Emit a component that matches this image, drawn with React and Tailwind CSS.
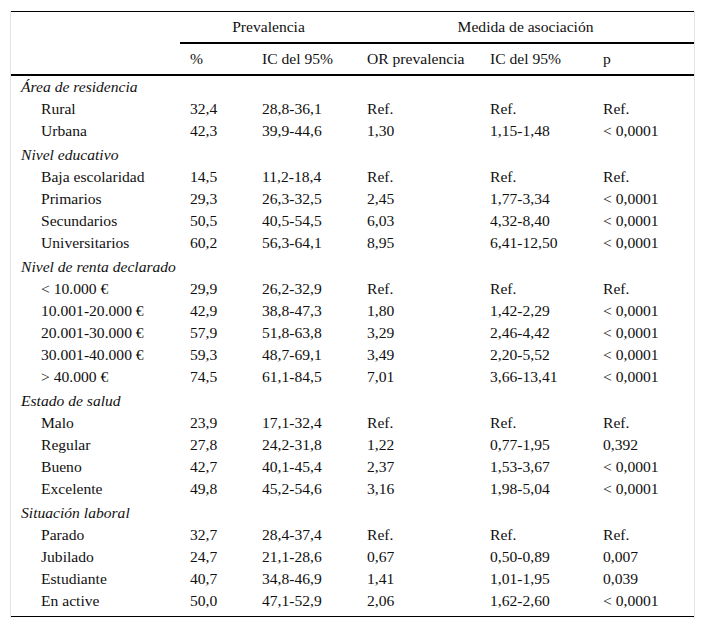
import React from "react";

const groups = [
  {
    title: "Área de residencia",
    rows: [
      ["Rural", "32,4", "28,8-36,1", "Ref.", "Ref.", "Ref."],
      ["Urbana", "42,3", "39,9-44,6", "1,30", "1,15-1,48", "< 0,0001"],
    ],
  },
  {
    title: "Nivel educativo",
    rows: [
      ["Baja escolaridad", "14,5", "11,2-18,4", "Ref.", "Ref.", "Ref."],
      ["Primarios", "29,3", "26,3-32,5", "2,45", "1,77-3,34", "< 0,0001"],
      ["Secundarios", "50,5", "40,5-54,5", "6,03", "4,32-8,40", "< 0,0001"],
      ["Universitarios", "60,2", "56,3-64,1", "8,95", "6,41-12,50", "< 0,0001"],
    ],
  },
  {
    title: "Nivel de renta declarado",
    rows: [
      ["< 10.000 €", "29,9", "26,2-32,9", "Ref.", "Ref.", "Ref."],
      ["10.001-20.000 €", "42,9", "38,8-47,3", "1,80", "1,42-2,29", "< 0,0001"],
      ["20.001-30.000 €", "57,9", "51,8-63,8", "3,29", "2,46-4,42", "< 0,0001"],
      ["30.001-40.000 €", "59,3", "48,7-69,1", "3,49", "2,20-5,52", "< 0,0001"],
      ["> 40.000 €", "74,5", "61,1-84,5", "7,01", "3,66-13,41", "< 0,0001"],
    ],
  },
  {
    title: "Estado de salud",
    rows: [
      ["Malo", "23,9", "17,1-32,4", "Ref.", "Ref.", "Ref."],
      ["Regular", "27,8", "24,2-31,8", "1,22", "0,77-1,95", "0,392"],
      ["Bueno", "42,7", "40,1-45,4", "2,37", "1,53-3,67", "< 0,0001"],
      ["Excelente", "49,8", "45,2-54,6", "3,16", "1,98-5,04", "< 0,0001"],
    ],
  },
  {
    title: "Situación laboral",
    rows: [
      ["Parado", "32,7", "28,4-37,4", "Ref.", "Ref.", "Ref."],
      ["Jubilado", "24,7", "21,1-28,6", "0,67", "0,50-0,89", "0,007"],
      ["Estudiante", "40,7", "34,8-46,9", "1,41", "1,01-1,95", "0,039"],
      ["En active", "50,0", "47,1-52,9", "2,06", "1,62-2,60", "< 0,0001"],
    ],
  },
];

export default function App() {
  return (
    <div className="bg-white w-[705px] h-[629px] pt-[11px] pl-[10px] font-['Liberation_Serif','Times_New_Roman',serif]">
      <div className="w-[685px] border-x border-[#e3e3e3] text-[15.6px] leading-[22px] text-[#111] font-['Liberation_Serif','Times_New_Roman',serif]">
        <div className="border-t border-black pb-[4px] border-b border-b-black">
          <table className="border-separate border-spacing-0 table-fixed w-[683px] font-['Liberation_Serif','Times_New_Roman',serif]">
            <colgroup>
              <col className="w-[169px]" />
              <col className="w-[72px]" />
              <col className="w-[105px]" />
              <col className="w-[123px]" />
              <col className="w-[113px]" />
              <col className="w-[101px]" />
            </colgroup>
            <thead>
              <tr>
                <th className="h-[32px] p-0"></th>
                <th
                  colSpan={2}
                  className="h-[32px] p-0 font-normal text-center border-b-2 border-black"
                >
                  Prevalencia
                </th>
                <th
                  colSpan={3}
                  className="h-[32px] p-0 font-normal text-center border-b-2 border-black"
                >
                  Medida de asociación
                </th>
              </tr>
              <tr>
                {["", "%", "IC del 95%", "OR prevalencia", "IC del 95%", "p"].map((h, i) => (
                  <th
                    key={i}
                    className="h-[32px] p-0 pl-[10px] font-normal text-left border-b-2 border-black whitespace-nowrap"
                  >
                    {h}
                  </th>
                ))}
              </tr>
            </thead>
            <tbody>
              {groups.map((g, gi) => (
                <React.Fragment key={g.title}>
                  <tr>
                    <td
                      colSpan={6}
                      className={
                        gi === 0
                          ? "p-0 pl-[10px] italic whitespace-nowrap"
                          : "p-0 pt-[2px] pl-[10px] italic whitespace-nowrap"
                      }
                    >
                      {g.title}
                    </td>
                  </tr>
                  {g.rows.map((r) => (
                    <tr key={r[0]}>
                      {r.map((c, ci) => (
                        <td
                          key={ci}
                          className={
                            ci === 0
                              ? "p-0 pl-[30px] whitespace-nowrap"
                              : "p-0 pl-[10px] whitespace-nowrap"
                          }
                        >
                          {c}
                        </td>
                      ))}
                    </tr>
                  ))}
                </React.Fragment>
              ))}
            </tbody>
          </table>
        </div>
        <div className="h-[1px]"></div>
      </div>
    </div>
  );
}
